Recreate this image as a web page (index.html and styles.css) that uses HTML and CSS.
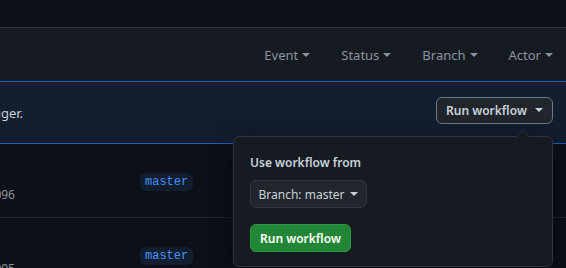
FILE: index.html
```html
<!DOCTYPE html>
<html lang="en">
<head>
  <meta charset="UTF-8" />
  <meta name="viewport" content="width=device-width, initial-scale=1.0"/>
  <title>Actions</title>
  <link rel="stylesheet" href="styles.css">
</head>
<body>
  <div class="topbar"></div>

  <div class="filters">
    <span class="filter">Event <i class="caret"></i></span>
    <span class="filter">Status <i class="caret"></i></span>
    <span class="filter">Branch <i class="caret"></i></span>
    <span class="filter">Actor <i class="caret"></i></span>
  </div>

  <div class="banner">
    <div class="clip"><span>This workflow has a workflow_dispatch event trigger.</span></div>
    <button class="btn">Run workflow <i class="caret"></i></button>
  </div>

  <div class="runs">
    <div class="run">
      <div class="clip meta"><span>Manually run by octocat &middot; #1096</span></div>
      <span class="branch">master</span>
    </div>
    <div class="run">
      <div class="clip meta"><span>Manually run by octocat &middot; #1095</span></div>
      <span class="branch">master</span>
    </div>
  </div>

  <div class="popover">
    <h4>Use workflow from</h4>
    <button class="btn btn-small">Branch: master <i class="caret"></i></button>
    <button class="btn btn-green">Run workflow</button>
  </div>
</body>
</html>
```

FILE: styles.css
```css
* { box-sizing: border-box; }

html { overflow: hidden; }

body {
  margin: 0;
  font-family: "Segoe UI", "Noto Sans", sans-serif;
  font-size: 12px;
  background: #0d1117;
  color: #c9d1d9;
  position: relative;
  height: 268px;
  overflow: hidden;
}

.topbar {
  height: 28px;
  border-bottom: 1px solid #30363d;
}

.filters {
  height: 54px;
  background: #161b22;
  border-bottom: 1px solid #1f5fbf;
  display: flex;
  align-items: center;
  justify-content: flex-end;
  gap: 31px;
  padding-right: 13px;
  font-size: 13px;
  color: #8b949e;
}

.filter {
  display: flex;
  align-items: center;
  gap: 4px;
}

.caret {
  display: inline-block;
  width: 0;
  height: 0;
  border-top: 4px solid currentColor;
  border-left: 4px solid transparent;
  border-right: 4px solid transparent;
}

.banner {
  height: 62px;
  background: #121d2f;
  border-bottom: 1px solid #1f5fbf;
  display: flex;
  align-items: center;
  justify-content: space-between;
  padding-right: 13px;
  font-size: 13px;
  color: #c9d1d9;
}

.clip {
  width: 23px;
  overflow: hidden;
  display: flex;
  justify-content: flex-end;
  white-space: nowrap;
}

.btn {
  font-family: inherit;
  font-size: 12px;
  font-weight: 600;
  color: #c9d1d9;
  background: #21262d;
  border: 1px solid #6e7681;
  border-radius: 6px;
  height: 27px;
  width: 117px;
  display: flex;
  align-items: center;
  justify-content: center;
  gap: 8px;
  margin-bottom: 5px;
}

.runs .run {
  height: 74px;
  border-bottom: 1px solid #21262d;
  display: flex;
  align-items: flex-start;
  gap: 125px;
}

.meta {
  width: 15px;
  margin-top: 42px;
  color: #8b949e;
  font-size: 12px;
}

.branch {
  margin-top: 29px;
  font-family: "Liberation Mono", monospace;
  font-size: 12px;
  color: #4493f8;
  background: #121d2f;
  border-radius: 6px;
  padding: 2px 5px;
  height: 18px;
  line-height: 14px;
}

.popover {
  position: absolute;
  left: 233px;
  top: 136px;
  width: 320px;
  height: 131px;
  background: #161b22;
  border: 1px solid #30363d;
  border-radius: 6px;
  padding: 16px 16px;
  box-shadow: 0 8px 24px rgba(1, 4, 9, 0.6);
}

.popover::before,
.popover::after {
  content: '';
  position: absolute;
  right: 22px;
  border: 7px solid transparent;
  border-top: 0;
}

.popover::before {
  top: -8px;
  border-bottom: 8px solid #30363d;
}

.popover::after {
  top: -7px;
  border-bottom: 8px solid #161b22;
}

.popover h4 {
  margin: 1px 0 9px;
  font-size: 12px;
  font-weight: 600;
  color: #c9d1d9;
}

.btn-small {
  width: 117px;
  height: 28px;
  font-weight: 400;
  border-color: #30363d;
  margin-bottom: 16px;
  gap: 6px;
}

.btn-green {
  width: 101px;
  height: 28px;
  background: #238636;
  border-color: #2b9a41;
  color: #fff;
}
```
